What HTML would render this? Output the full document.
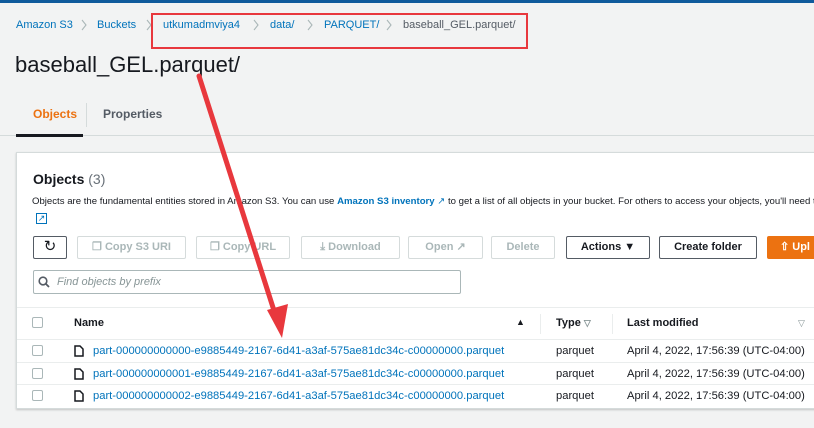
<!DOCTYPE html>
<html><head><style>
*{box-sizing:border-box;margin:0;padding:0}
body{width:814px;height:428px;background:#f2f3f3;font-family:"Liberation Sans",sans-serif;position:relative;overflow:hidden;color:#16191f}
.a{position:absolute;white-space:nowrap}
.bc{font-size:11px;color:#0073bb;top:19px}
.btn{position:absolute;top:236px;height:23px;border:1px solid #d5dbdb;background:#fff;color:#aab7b8;font-size:11px;font-weight:bold;text-align:center;line-height:21px;border-radius:2px}
.btn.d{border-color:#545b64;color:#16191f}
.row{position:absolute;left:17px;width:797px;height:23px;border-top:1px solid #eaeded;font-size:11.2px}
.cb{position:absolute;left:15px;top:5px;width:11px;height:11px;border:1px solid #aab7b8;border-radius:2px;background:#fff}
</style></head><body>
<div class="a" style="left:0;top:0;width:814px;height:3px;background:#0f5b9c"></div>
<div class="a bc" style="left:16px">Amazon S3</div>
<div class="a bc" style="left:97px">Buckets</div>
<div class="a bc" style="left:163px">utkumadmviya4</div>
<div class="a bc" style="left:270px">data/</div>
<div class="a bc" style="left:324px">PARQUET/</div>
<div class="a bc" style="left:403px;color:#545b64">baseball_GEL.parquet/</div>
<svg class="a" style="left:0;top:0" width="420" height="40"><g fill="none" stroke="#aab7b8" stroke-width="1.1"><path d="M82 20l4 5-4 5"/><path d="M147 20l4 5-4 5"/><path d="M254 20l4 5-4 5"/><path d="M308 20l4 5-4 5"/><path d="M387 20l4 5-4 5"/></g></svg>
<div class="a" style="left:151px;top:13px;width:377px;height:36px;border:2px solid #e8383d"></div>
<div class="a" style="left:15px;top:52px;font-size:22px">baseball_GEL.parquet/</div>
<div class="a" style="left:33px;top:107px;font-size:12px;font-weight:bold;color:#ec7211">Objects</div>
<div class="a" style="left:86px;top:103px;width:1px;height:24px;background:#d5dbdb"></div>
<div class="a" style="left:103px;top:107px;font-size:12px;font-weight:bold;color:#545b64">Properties</div>
<div class="a" style="left:0;top:135px;width:814px;height:1px;background:#d5dbdb"></div>
<div class="a" style="left:16px;top:134px;width:67px;height:3px;background:#16191f"></div>
<div class="a" style="left:16px;top:152px;width:800px;height:257px;background:#fff;border:1px solid #d5dbdb;box-shadow:0 1px 2px rgba(0,0,0,.2)"></div>
<div class="a" style="left:33px;top:171px;font-size:14px;font-weight:bold">Objects <span style="font-weight:normal;color:#687078">(3)</span></div>
<div class="a" style="left:32px;top:196px;font-size:9.6px;color:#16191f">Objects are the fundamental entities stored in Amazon S3. You can use <b style="color:#0073bb">Amazon S3 inventory</b> <span style="color:#0073bb">&#x2197;</span> to get a list of all objects in your bucket. For others to access your objects, you'll need to e</div>
<div class="a" style="left:36px;top:213px;width:11px;height:11px;border:1.5px solid #0073bb;color:#0073bb;font-size:9px;line-height:8px;text-align:center">&#x2197;</div>
<div class="btn d" style="left:33px;width:34px;font-size:15px;line-height:20px;font-weight:normal">&#x21bb;</div>
<div class="btn" style="left:77px;width:109px">&#x2750; Copy S3 URI</div>
<div class="btn" style="left:196px;width:94px">&#x2750; Copy URL</div>
<div class="btn" style="left:301px;width:99px">&#x2913; Download</div>
<div class="btn" style="left:408px;width:75px">Open &#x2197;</div>
<div class="btn" style="left:491px;width:64px">Delete</div>
<div class="btn d" style="left:566px;width:84px">Actions &#x25BC;</div>
<div class="btn d" style="left:659px;width:98px">Create folder</div>
<div class="btn" style="left:767px;width:60px;background:#ec7211;border-color:#ec7211;color:#fff;text-align:left;padding-left:12px">&#x21E7; Upl</div>
<div class="a" style="left:33px;top:270px;width:428px;height:24px;border:1px solid #aab7b8;border-radius:2px;background:#fff"></div>
<svg class="a" style="left:38px;top:276px" width="12" height="12"><circle cx="5" cy="5" r="3.8" fill="none" stroke="#545b64" stroke-width="1.6"/><line x1="8" y1="8" x2="11" y2="11" stroke="#545b64" stroke-width="1.8"/></svg>
<div class="a" style="left:57px;top:276px;font-size:11px;font-style:italic;color:#879596">Find objects by prefix</div>
<div class="row" style="top:307px;height:32px;border-top:1px solid #eaeded;background:#fff">
<div class="cb" style="top:9px;left:15px"></div>
<div class="a" style="left:57px;top:9px;font-weight:bold;font-size:11px">Name</div>
<div class="a" style="left:499px;top:9px;font-size:9px">&#x25B2;</div>
<div class="a" style="left:523px;top:6px;width:1px;height:20px;background:#eaeded"></div>
<div class="a" style="left:539px;top:9px;font-weight:bold;font-size:11px">Type <span style="color:#879596;font-size:9px">&#x25BD;</span></div>
<div class="a" style="left:595px;top:6px;width:1px;height:20px;background:#eaeded"></div>
<div class="a" style="left:610px;top:9px;font-weight:bold;font-size:11px">Last modified</div>
<div class="a" style="left:781px;top:10px;color:#879596;font-size:9px">&#x25BD;</div>
</div>
<div class="row" style="top:339px"><div class="cb"></div><svg class="a" style="left:57px;top:5px" width="10" height="12"><path d="M1 1H6L9 4V11H1Z" fill="none" stroke="#16191f" stroke-width="1.5"/></svg><div class="a" style="left:76px;top:5px;color:#0073bb">part-000000000000-e9885449-2167-6d41-a3af-575ae81dc34c-c00000000.parquet</div><div class="a" style="left:539px;top:5px">parquet</div><div class="a" style="left:610px;top:5px">April 4, 2022, 17:56:39 (UTC-04:00)</div></div>
<div class="row" style="top:362px"><div class="cb"></div><svg class="a" style="left:57px;top:5px" width="10" height="12"><path d="M1 1H6L9 4V11H1Z" fill="none" stroke="#16191f" stroke-width="1.5"/></svg><div class="a" style="left:76px;top:5px;color:#0073bb">part-000000000001-e9885449-2167-6d41-a3af-575ae81dc34c-c00000000.parquet</div><div class="a" style="left:539px;top:5px">parquet</div><div class="a" style="left:610px;top:5px">April 4, 2022, 17:56:39 (UTC-04:00)</div></div>
<div class="row" style="top:384px"><div class="cb"></div><svg class="a" style="left:57px;top:5px" width="10" height="12"><path d="M1 1H6L9 4V11H1Z" fill="none" stroke="#16191f" stroke-width="1.5"/></svg><div class="a" style="left:76px;top:5px;color:#0073bb">part-000000000002-e9885449-2167-6d41-a3af-575ae81dc34c-c00000000.parquet</div><div class="a" style="left:539px;top:5px">parquet</div><div class="a" style="left:610px;top:5px">April 4, 2022, 17:56:39 (UTC-04:00)</div></div>
<svg class="a" style="left:0;top:0" width="814" height="428"><line x1="199" y1="76" x2="277" y2="320" stroke="#e8383d" stroke-width="5" stroke-linecap="round"/><polygon points="282,338 267,310 288,304" fill="#e8383d"/></svg>
</body></html>
